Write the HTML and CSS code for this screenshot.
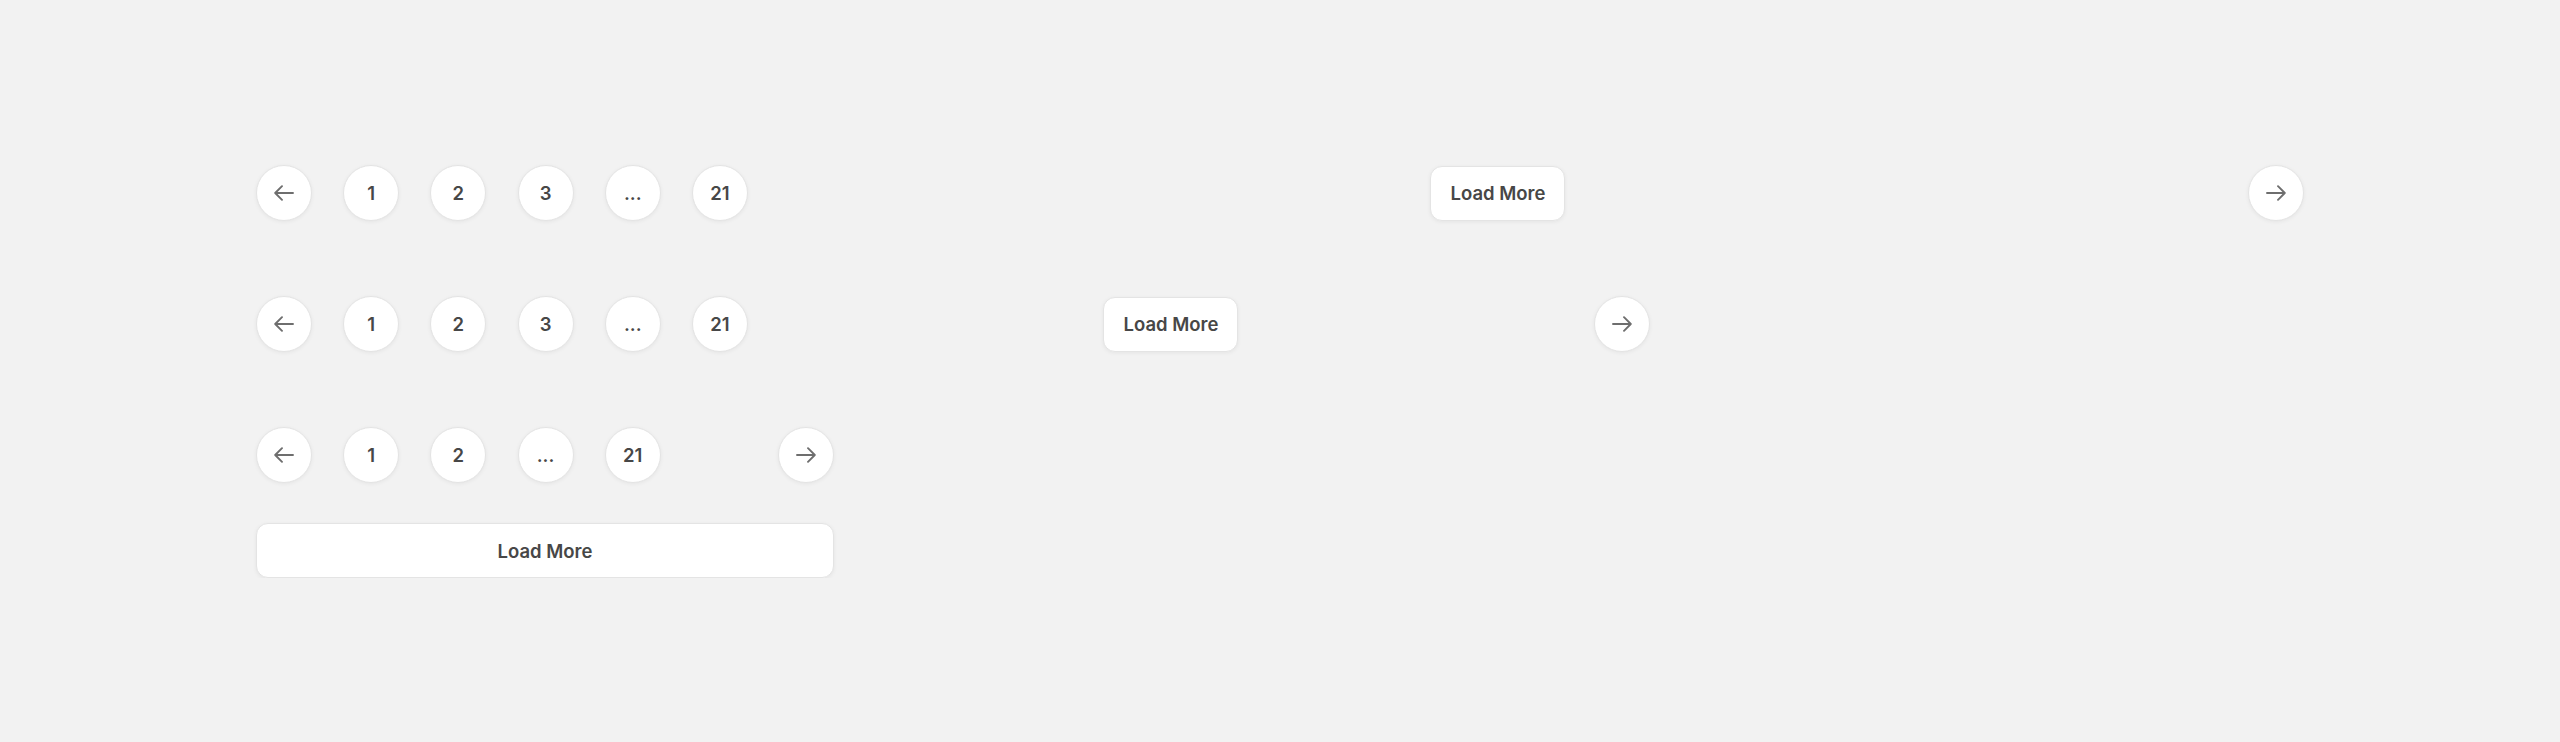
FILE: index.html
```html
<!DOCTYPE html>
<html lang="en">
<head>
    <meta charset="UTF-8">
    <meta name="viewport" content="width=device-width, initial-scale=1.0">
    <title>Pagination</title>
    <link rel="stylesheet" href="styles.css">
</head>
<body>
    <div class="canvas">
        <!-- desktop: pager, load more, next -->
        <div class="row row-wide">
            <div class="pager">
                <button class="circle"><svg class="arrow" viewBox="0 0 20 16"><path d="M19 8H1.5M8 1.2L1.2 8 8 14.8"/></svg></button>
                <button class="circle">1</button>
                <button class="circle">2</button>
                <button class="circle">3</button>
                <button class="circle">...</button>
                <button class="circle">21</button>
            </div>
            <button class="load-more">Load More</button>
            <button class="circle"><svg class="arrow" viewBox="0 0 20 16"><path d="M1 8h17.5M12 1.2L18.8 8 12 14.8"/></svg></button>
        </div>

        <!-- tablet -->
        <div class="row row-mid">
            <div class="pager">
                <button class="circle"><svg class="arrow" viewBox="0 0 20 16"><path d="M19 8H1.5M8 1.2L1.2 8 8 14.8"/></svg></button>
                <button class="circle">1</button>
                <button class="circle">2</button>
                <button class="circle">3</button>
                <button class="circle">...</button>
                <button class="circle">21</button>
            </div>
            <button class="load-more">Load More</button>
            <button class="circle"><svg class="arrow" viewBox="0 0 20 16"><path d="M1 8h17.5M12 1.2L18.8 8 12 14.8"/></svg></button>
        </div>

        <!-- mobile -->
        <div class="row row-small">
            <div class="pager">
                <button class="circle"><svg class="arrow" viewBox="0 0 20 16"><path d="M19 8H1.5M8 1.2L1.2 8 8 14.8"/></svg></button>
                <button class="circle">1</button>
                <button class="circle">2</button>
                <button class="circle">...</button>
                <button class="circle">21</button>
            </div>
            <button class="circle"><svg class="arrow" viewBox="0 0 20 16"><path d="M1 8h17.5M12 1.2L18.8 8 12 14.8"/></svg></button>
        </div>
        <button class="load-more load-more-full">Load More</button>
    </div>
</body>
</html>
```

FILE: styles.css
```css
body {
    margin: 0;
    background-color: #f2f2f2;
    font-family: Inter, "Noto Sans", sans-serif;
    color: #474747;
}

.canvas {
    padding: 165px 0 0 256px;
}

.row {
    display: flex;
    justify-content: space-between;
    align-items: center;
    margin-bottom: 75px;
}

.row-wide {
    width: 2048px;
}

.row-mid {
    width: 1394px;
}

.row-small {
    width: 578px;
    margin-bottom: 40px;
}

.pager {
    display: flex;
    gap: 31.2px;
}

button {
    font-family: inherit;
    color: inherit;
    cursor: pointer;
}

.circle {
    width: 56px;
    height: 56px;
    border-radius: 50%;
    background-color: #fff;
    border: 1px solid #e4e4e4;
    box-shadow: 0 1px 4px rgba(0, 0, 0, 0.06);
    display: flex;
    align-items: center;
    justify-content: center;
    padding: 0;
    font-size: 18.5px;
    font-weight: 600;
    flex-shrink: 0;
}

.arrow {
    width: 20px;
    height: 16px;
    fill: none;
    stroke: #6e6e6e;
    stroke-width: 1.9;
    stroke-linecap: round;
    stroke-linejoin: round;
}

.load-more {
    width: 135px;
    height: 55px;
    border-radius: 12px;
    background-color: #fff;
    border: 1px solid #e4e4e4;
    box-shadow: 0 1px 4px rgba(0, 0, 0, 0.06);
    font-size: 18.5px;
    font-weight: 600;
    padding: 0;
}

.load-more-full {
    display: block;
    width: 578px;
}
```
